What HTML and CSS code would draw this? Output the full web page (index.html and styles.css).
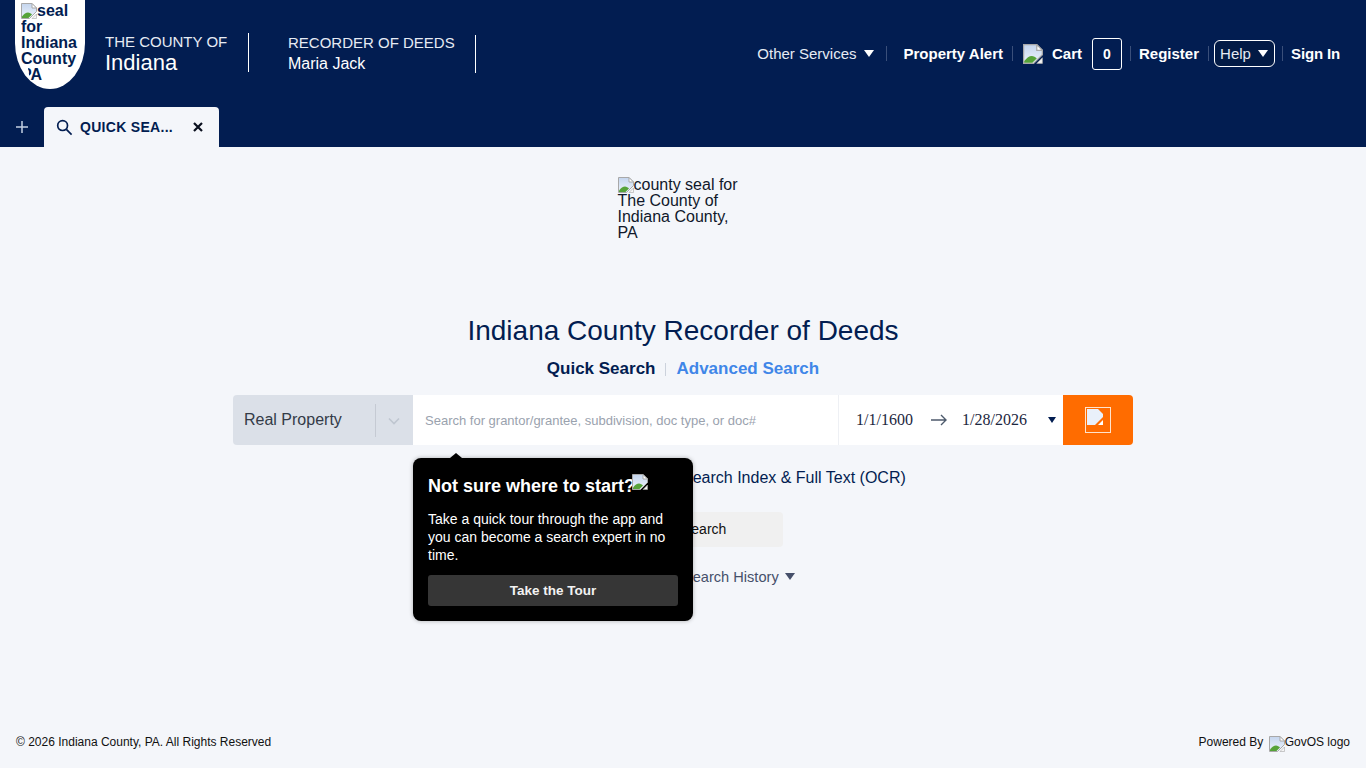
FILE: index.html
```html
<!DOCTYPE html>
<html lang="en">
<head>
<meta charset="utf-8">
<title>Indiana County Recorder of Deeds</title>
<link rel="stylesheet" href="styles.css">
</head>
<body>
<svg class="defs" width="0" height="0" aria-hidden="true">
  <defs>
    <linearGradient id="sky" x1="0" y1="0" x2="0" y2="1"><stop offset="0" stop-color="#c4d5ee"/><stop offset="1" stop-color="#eef4fc"/></linearGradient>
  </defs>
  <symbol id="broken" viewBox="0 0 16 16">
    <path d="M.5.5H11L15.5 5V8.5L8.5 15.5H.5Z" fill="url(#sky)" stroke="#a8a8a8"/>
    <path d="M11 .5V5H15.5Z" fill="#fff" stroke="#a8a8a8"/>
    <path d="M1 15V13.5C3 11 5 9.5 7 9.5C8.5 9.5 10 10.5 11 11.5L7.5 15Z" fill="#56a339"/>
    <path d="M15.5 11V15.5H11Z" fill="#f5f5f5" stroke="#a8a8a8" stroke-width=".6"/>
  </symbol>
</svg>
<header class="header">
  <div class="top">
    <div class="brand">
      <div class="seal"><div class="seal-inner"><svg class="bi"><use href="#broken"/></svg>seal for Indiana County PA</div></div>
      <div class="county"><span class="county-a">THE COUNTY OF</span><span class="county-b">Indiana</span></div>
      <div class="recorder"><span class="rec-a">RECORDER OF DEEDS</span><span class="rec-b">Maria Jack</span></div>
    </div>
    <nav class="nav">
      <a class="nav-plain">Other Services <i class="tri"></i></a>
      <span class="sep sep-a"></span>
      <a class="nav-bold">Property Alert</a>
      <span class="sep sep-b"></span>
      <svg class="cart-icon"><use href="#broken"/></svg>
      <a class="nav-bold cart-label">Cart</a>
      <span class="cart-count">0</span>
      <span class="sep sep-c"></span>
      <a class="nav-bold">Register</a>
      <span class="sep sep-d"></span>
      <a class="help">Help <i class="tri"></i></a>
      <span class="sep sep-e"></span>
      <a class="nav-bold sign">Sign In</a>
    </nav>
  </div>
  <div class="tabs">
    <svg class="plus" viewBox="0 0 14 14"><path d="M7 1V13M1 7H13" stroke="#c3cfe2" stroke-width="1.5" fill="none"/></svg>
    <div class="tab">
      <svg class="tab-search" viewBox="0 0 18 18"><circle cx="7" cy="7" r="5.2" fill="none" stroke="#021d51" stroke-width="1.8"/><path d="M11 11L16.5 16.5" stroke="#021d51" stroke-width="1.8"/></svg>
      <span class="tab-label">QUICK SEA...</span>
      <svg class="tab-close" viewBox="0 0 10 10"><path d="M1 1L9 9M9 1L1 9" stroke="#0a0f1e" stroke-width="2.2"/></svg>
    </div>
  </div>
</header>
<main class="main">
  <div class="logo"><svg class="bi"><use href="#broken"/></svg>county seal for The County of Indiana County, PA</div>
  <h1 class="title">Indiana County Recorder of Deeds</h1>
  <div class="modes"><a class="mode-on">Quick Search</a><span class="mode-sep"></span><a class="mode-off">Advanced Search</a></div>
  <div class="bar">
    <div class="select"><span class="select-text">Real Property</span><span class="select-sep"></span>
      <svg class="chev" viewBox="0 0 12 8"><path d="M1 1.5L6 6.5 11 1.5" fill="none" stroke="#bfc6d0" stroke-width="1.6"/></svg>
    </div>
    <div class="input">Search for grantor/grantee, subdivision, doc type, or doc#</div>
    <div class="dates">
      <span class="date-a">1/1/1600</span>
      <svg class="arrow" viewBox="0 0 16 12"><path d="M0 6H15M10 1L15 6 10 11" fill="none" stroke="#4d5a6c" stroke-width="1.4"/></svg>
      <span class="date-b">1/28/2026</span>
      <i class="date-tri"></i>
    </div>
    <div class="go"><span class="go-frame"><svg class="go-icon" viewBox="0 0 16 16"><path d="M0 0H11L16 5V8L8 16H0Z" fill="#e9f0fa"/><path d="M16 11V16H11Z" fill="#fff"/></svg></span></div>
  </div>
  <div class="scope">Search Index &amp; Full Text (OCR)</div>
  <div class="btn-row"><button class="search-btn">Search</button></div>
  <div class="history">Search History <i class="hist-tri"></i></div>
  <aside class="pop">
    <div class="pop-title">Not sure where to start?<svg class="pop-icon"><use href="#broken"/></svg></div>
    <p class="pop-text">Take a quick tour through the app and you can become a search expert in no time.</p>
    <button class="pop-btn">Take the Tour</button>
  </aside>
</main>
<footer class="footer">
  <span>© 2026 Indiana County, PA. All Rights Reserved</span>
  <span class="powered">Powered By <svg class="bi foot-icon"><use href="#broken"/></svg>GovOS logo</span>
</footer>
</body>
</html>
```
FILE: styles.css
```css
* { box-sizing: border-box; }
html, body { margin: 0; height: 100%; }
body {
  width: 1366px; height: 768px; overflow: hidden;
  display: flex; flex-direction: column;
  background: #f4f6fa; color: #021d51;
  font-family: "Liberation Sans", Arial, sans-serif;
}
.defs { position: absolute; }
.bi { width: 16px; height: 16px; vertical-align: baseline; margin-bottom: -3px; }
.header { height: 147px; background: #021d51; color: #fff; flex: none; display: flex; flex-direction: column; }
.top { height: 107px; display: flex; justify-content: space-between; }
.brand { display: flex; align-items: flex-start; padding-left: 15px; }
.seal {
  width: 70px; height: 89px; background: #fff; color: #021d51;
  border-radius: 0 0 35px 35px / 0 0 46px 46px;
  padding: 3px 6px 0; overflow: hidden;
  font-weight: 700; font-size: 16px; line-height: 16px;
}
.seal-inner { height: 78px; overflow: hidden; clip-path: polygon(0 0, 100% 0, 100% 100%, 9px 100%, 7px 65px, 0 63px); }
.county { display: flex; flex-direction: column; margin: 33px 0 0 20px; width: 144px; height: 39px; border-right: 1px solid #fff; }
.county-a { font-size: 15px; line-height: 17px; color: #e6ebf4; }
.county-b { font-size: 22px; line-height: 24px; margin-top: 1px; }
.recorder { display: flex; flex-direction: column; margin: 35px 0 0 0; padding-left: 39px; width: 227px; height: 38px; border-right: 1px solid #fff; }
.rec-a { font-size: 15px; line-height: 16px; color: #e6ebf4; }
.rec-b { font-size: 16px; line-height: 18px; margin-top: 4px; }
.nav { display: flex; align-items: flex-start; height: 107px; padding: 38px 26px 0 0; font-size: 15px; }
.nav > * { flex: none; }
.nav-plain { line-height: 31px; color: #e6ebf4; display: flex; align-items: center; gap: 7px; }
.nav-bold { font-weight: 700; line-height: 31px; }
.sign { letter-spacing: -.15px; }
.tri { display: inline-block; width: 0; height: 0; border-left: 5.5px solid transparent; border-right: 5.5px solid transparent; border-top: 7px solid #fff; }
.sep { width: 1px; height: 15px; background: #3a4f7a; margin-top: 8px; }
.sep-a { margin-left: 12px; margin-right: 17px; }
.sep-b { margin-left: 9px; margin-right: 10px; }
.sep-c { margin-left: 8px; margin-right: 8px; }
.sep-d { margin-left: 9px; margin-right: 5px; }
.sep-e { margin-left: 7px; margin-right: 8px; }
.cart-icon { width: 20px; height: 20px; margin: 6px 9px 0 0; }
.cart-count { width: 30px; height: 32px; border: 1px solid #fff; border-radius: 3px; margin-left: 10px; text-align: center; font-weight: 700; font-size: 14px; line-height: 30px; }
.help { display: flex; align-items: center; gap: 7px; height: 27px; margin-top: 2px; padding: 0 5px; width: 61px; border: 1px solid #fff; border-radius: 6px; background: #021a45; color: #e6ebf4; font-size: 15px; }
.tabs { height: 40px; display: flex; align-items: flex-end; padding-left: 15px; }
.plus { width: 14px; height: 14px; margin: 0 15px 13px 0; }
.tab { width: 175px; height: 40px; background: #f4f6fa; border-radius: 4px 4px 0 0; display: flex; align-items: center; padding-left: 12px; color: #021d51; }
.tab-search { width: 17px; height: 17px; }
.tab-label { margin-left: 7px; width: 113px; font-weight: 700; font-size: 14px; white-space: nowrap; letter-spacing: .3px; }
.tab-close { width: 10px; height: 10px; }
.main { position: relative; flex: 1; display: flex; flex-direction: column; align-items: center; }
.logo { width: 130px; margin: 30px 0 0 -1px; height: 77px; font-size: 16px; line-height: 16px; color: #10182a; }
.title { margin: 61px 0 0; font-size: 28px; line-height: 32px; font-weight: 400; color: #021d51; text-align: center; }
.modes { display: flex; align-items: center; margin-top: 10px; height: 24px; font-size: 17px; font-weight: 700; }
.mode-on { color: #021d51; }
.mode-sep { width: 1px; height: 13px; background: #ccd2dc; margin: 0 10px; }
.mode-off { color: #3f86e8; }
.bar { display: flex; width: 900px; height: 50px; margin-top: 14px; }
.select { width: 180px; background: #dbe0e8; border-radius: 4px 0 0 4px; display: flex; align-items: center; padding-left: 11px; color: #333b47; font-size: 16px; }
.select-text { width: 131px; }
.select-sep { width: 1px; height: 33px; background: #c5cad3; }
.chev { width: 12px; height: 8px; margin-left: 12px; margin-top: 2px; }
.input { width: 426px; background: #fff; border-right: 1px solid #eef0f4; padding: 1px 0 0 12px; line-height: 49px; font-size: 13px; color: #9aa2ae; white-space: nowrap; }
.dates { width: 224px; background: #fff; display: flex; align-items: center; font-family: "Liberation Serif", serif; font-size: 16px; color: #1c2740; padding-left: 17px; }
.date-a { width: 58px; }
.arrow { width: 16px; height: 12px; margin-left: 17px; }
.date-b { width: 66px; margin-left: 15px; }
.date-tri { width: 0; height: 0; margin-left: 20px; border-left: 4.5px solid transparent; border-right: 4.5px solid transparent; border-top: 6px solid #021d51; }
.go { width: 70px; background: #ff6c00; border-radius: 0 4px 4px 0; display: flex; align-items: center; justify-content: center; }
.go-frame { width: 26px; height: 26px; border: 1px solid #ffe3cc; padding: 1px; display: block; }
.go-icon { width: 16px; height: 16px; display: block; }
.scope { margin-top: 23px; align-self: flex-start; margin-left: 682px; font-size: 16px; line-height: 20px; color: #021d51; white-space: nowrap; }
.btn-row { margin-top: 24px; align-self: flex-start; margin-left: 583px; }
.search-btn { display: block; width: 200px; height: 35px; border: 0; border-radius: 4px; background: #f0f0f0; font: 14px "Liberation Sans", sans-serif; color: #111; padding: 0 0 2px 99px; text-align: left; }
.history { margin-top: 21px; align-self: flex-start; margin-left: 683px; font-size: 14.6px; line-height: 18px; color: #46506a; white-space: nowrap; }
.hist-tri { display: inline-block; width: 0; height: 0; margin-left: 2px; vertical-align: 2px; border-left: 5px solid transparent; border-right: 5px solid transparent; border-top: 7px solid #46506a; }
.pop { position: absolute; left: 413px; top: 311px; width: 280px; height: 163px; background: #000; border-radius: 8px; box-shadow: 0 0 4px rgba(0,0,0,.3); padding: 16px 15px 0; color: #fff; }
.pop::before { content: ""; position: absolute; left: 37px; top: -5px; border-left: 6px solid transparent; border-right: 6px solid transparent; border-bottom: 5px solid #000; }
.pop-title { font-size: 18px; line-height: 21px; font-weight: 700; white-space: nowrap; }
.pop-icon { width: 16px; height: 16px; vertical-align: 2px; margin-left: -3px; }
.pop-text { margin: 13px 0 0; font-size: 14px; line-height: 18px; }
.pop-btn { display: block; width: 250px; height: 31px; margin-top: 11px; border: 0; border-radius: 3px; background: #363636; color: #f2f2f2; font: 700 13.5px "Liberation Sans", sans-serif; padding: 0; }
.footer { flex: none; height: 51px; display: flex; justify-content: space-between; align-items: flex-start; padding: 16px 16px 0; font-size: 12px; line-height: 18px; color: #111; }
.foot-icon { margin: 0 0 -6px 2px; }
```
